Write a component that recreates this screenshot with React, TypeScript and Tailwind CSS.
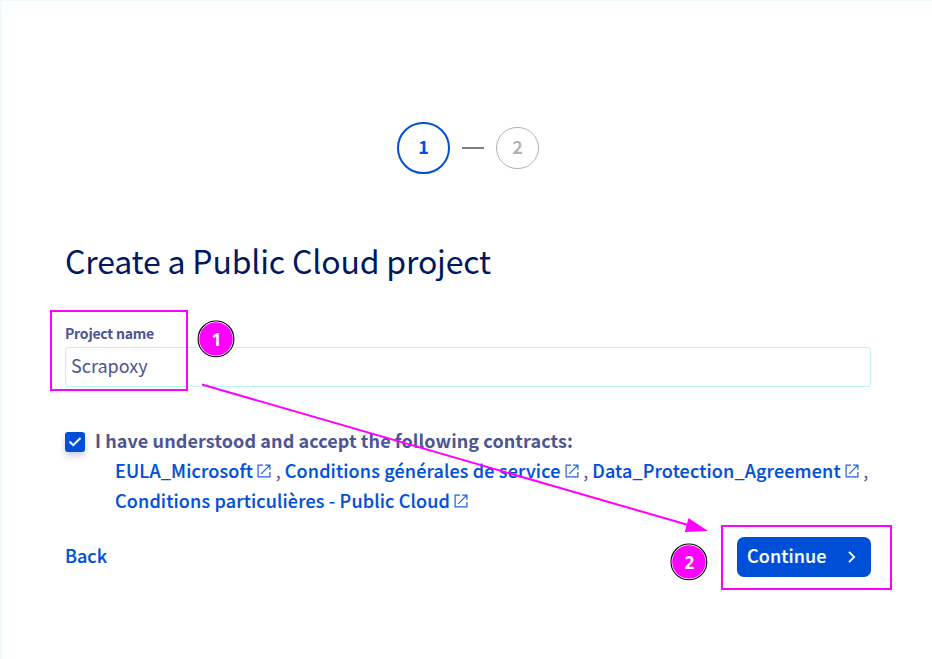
import React from "react";

function ExternalIcon() {
  return (
    <svg className="ml-[4px] mr-[0.6px] inline-block h-[14px] w-[14px] align-[0px]" viewBox="0 0 14 14" fill="none" stroke="#1f62d8" strokeWidth="1.2">
      <path d="M6 1.1H1.1V12.9H12.9V8M8.2 1.1H12.9V5.8M12.6 1.4L4.2 9.8" />
    </svg>
  );
}

function ContractLink({ label }: { label: string }) {
  return (
    <a className="whitespace-nowrap font-medium text-[#0050d7]">
      <span className="tracking-[0.15px] [-webkit-text-stroke:0.15px_#0050d7]">{label}</span>
      <ExternalIcon />
    </a>
  );
}

function Marker({ value, cx, cy }: { value: string; cx: number; cy: number }) {
  return (
    <g>
      <circle cx={cx} cy={cy} r="17.9" fill="white" stroke="black" strokeWidth="1.1" />
      <circle cx={cx} cy={cy} r="16.7" fill="#ff00ff" />
      <text x={cx + 0.5} y={cy + 6.9} textAnchor="middle" fill="white" className="font-['Noto_Sans',sans-serif] text-[17px] font-bold">
        {value}
      </text>
    </g>
  );
}

export default function App() {
  return (
    <div className="relative h-[659px] w-[932px] overflow-hidden border-l-2 border-t border-[#f0faff] bg-white font-['Noto_Sans_CJK_SC','Noto_Sans_CJK_JP',sans-serif] text-[18px] text-[#4d5592]">
      <div className="flex flex-col pl-[63px] pr-[61px] pt-[121px]">
        <div className="ml-[332px] flex h-[52px] items-center">
          <div className="flex h-[52px] w-[53px] items-center justify-center rounded-full border-2 border-[#0050d7] pb-1 font-bold leading-none text-[#0050d7]">1</div>
          <div className="ml-3 h-[2px] w-[22px] bg-[#808080]" />
          <div className="ml-3 flex h-[42px] w-[43px] items-center justify-center rounded-full border border-[#b3b3b3] pb-1 font-bold leading-none text-[#b3b3b3]">2</div>
        </div>

        <h1 className="mt-[63px] h-[50px] whitespace-nowrap text-[32px] leading-[46px] tracking-[-0.17px] text-[#00185e]">Create a Public Cloud project</h1>

        <label className="mt-[36px] h-[22px] text-[14px] font-bold leading-[20px] tracking-[-0.22px]">Project name</label>
        <div className="mt-[2px] flex h-[40px] items-center rounded-[3px] border border-[#bef1ff] pb-[3px] pl-[5px] leading-[35px]">Scrapoxy</div>

        <div className="mt-[40px] flex h-[30px] items-center">
          <div className="flex h-5 w-5 items-center justify-center rounded-[3px] bg-[#0050d7] shadow-[0_4px_6px_rgba(0,14,156,0.2)]">
            <svg className="h-5 w-5" viewBox="0 0 20 20" fill="none" stroke="white" strokeWidth="1.9">
              <path d="M4.5 9.5L8.2 13.2L15.5 6" />
            </svg>
          </div>
          <span className="ml-[10px] whitespace-nowrap pb-1 font-bold tracking-[0.09px]">I have understood and accept the following contracts:</span>
        </div>
        <div className="-mt-[2px] ml-[50px] whitespace-nowrap leading-[30px]">
          <div className="h-[30px]">
            <ContractLink label="EULA_Microsoft" /> , <ContractLink label="Conditions générales de service" /> , <ContractLink label="Data_Protection_Agreement" /> ,
          </div>
          <div className="h-[30px]">
            <ContractLink label="Conditions particulières - Public Cloud" />
          </div>
        </div>

        <div className="mt-[22px] flex h-[40px] items-center justify-between">
          <a className="pb-1 font-medium text-[#0050d7] [-webkit-text-stroke:0.15px_#0050d7]">Back</a>
          <button className="flex h-[40px] w-[134px] items-center rounded-[7px] bg-[#0050d7] pl-[10px] font-medium text-white">
            <span className="pb-1 tracking-[0.1px] [-webkit-text-stroke:0.15px_white]">Continue</span>
            <svg className="ml-[20px] h-[14px] w-[10px]" viewBox="0 0 10 14" fill="none" stroke="white" strokeWidth="1.8">
              <path d="M2 1.8L7.2 7L2 12.2" />
            </svg>
          </button>
        </div>
      </div>

      <div className="absolute left-[48px] top-[309px] h-[81px] w-[138px] border-2 border-[#ff00ff]" />
      <div className="absolute left-[719px] top-[524px] h-[65px] w-[171px] border-2 border-[#ff00ff]" />
      <svg className="absolute -left-[2px] -top-px h-[659px] w-[932px]" viewBox="0 0 932 659">
        <path d="M202 384.5L690 525.5" stroke="#ff00ff" strokeWidth="2" />
        <path d="M688.5 518L708 531L684.8 532Z" fill="#ff00ff" />
        <Marker value="1" cx={216} cy={338.9} />
        <Marker value="2" cx={688.9} cy={561.9} />
      </svg>
    </div>
  );
}
